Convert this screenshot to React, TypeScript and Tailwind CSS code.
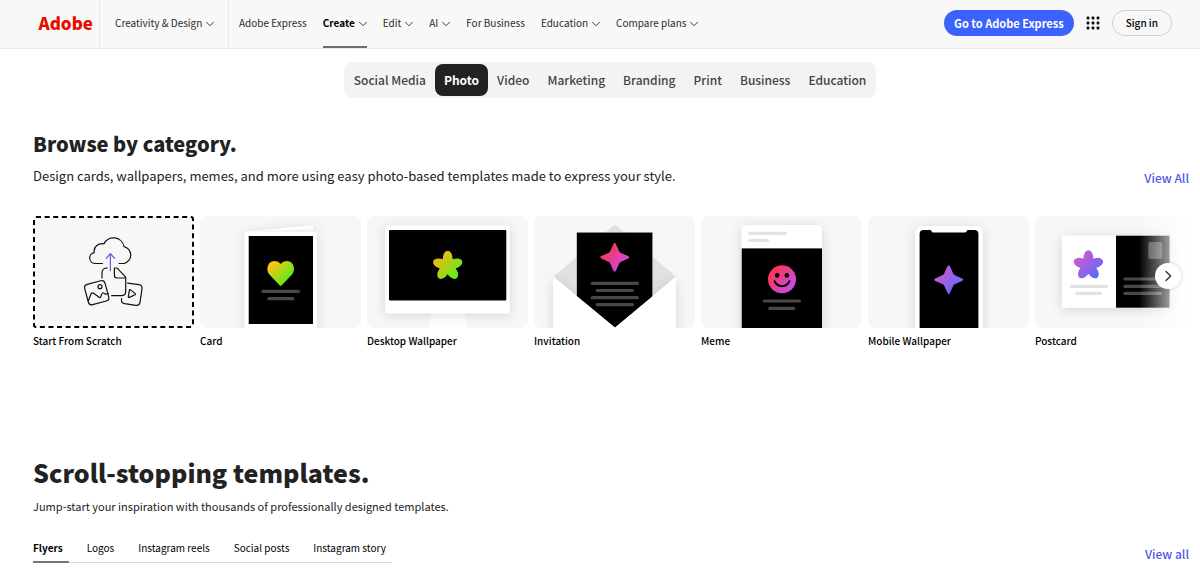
import React from 'react';

interface NavItem {
  label: string;
  menu?: boolean;
  active?: boolean;
}

const navItems: NavItem[] = [
  { label: 'Adobe Express' },
  { label: 'Create', menu: true, active: true },
  { label: 'Edit', menu: true },
  { label: 'AI', menu: true },
  { label: 'For Business' },
  { label: 'Education', menu: true },
  { label: 'Compare plans', menu: true },
];

const categoryTabs = ['Social Media', 'Photo', 'Video', 'Marketing', 'Branding', 'Print', 'Business', 'Education'];

const templateTabs = ['Flyers', 'Logos', 'Instagram reels', 'Social posts', 'Instagram story'];

const Chevron: React.FC = () => (
  <svg className="mt-0.5 h-2 w-2 shrink-0" viewBox="0 0 8 8" fill="none" stroke="#444" strokeWidth="1">
    <path d="M0.3 2 L4 5.8 L7.7 2" />
  </svg>
);

const Line: React.FC<{ x1: number; x2: number; y: number; color?: string }> = ({ x1, x2, y, color = '#484848' }) => (
  <line x1={x1 + 1.6} x2={x2 - 1.6} y1={y} y2={y} stroke={color} strokeWidth="3.2" strokeLinecap="round" />
);

const Gradient: React.FC<{ id: string; from: string; to: string }> = ({ id, from, to }) => (
  <linearGradient id={id} x1="0.1" y1="0.15" x2="0.85" y2="0.85">
    <stop offset="0" stopColor={from} />
    <stop offset="1" stopColor={to} />
  </linearGradient>
);

const Shadow: React.FC<{ id: string }> = ({ id }) => (
  <filter id={id} x="-30%" y="-30%" width="160%" height="160%">
    <feDropShadow dx="0" dy="2" stdDeviation="6" floodColor="#000" floodOpacity="0.14" />
  </filter>
);

const Flower: React.FC<{ id: string; cx: number; cy: number; from: string; to: string }> = ({ id, cx, cy, from, to }) => (
  <g transform={`translate(${cx} ${cy})`}>
    <defs>
      <Gradient id={`${id}-fill`} from={from} to={to} />
      <clipPath id={`${id}-petals`}>
        {[0, 72, 144, 216, 288].map((angle) => (
          <ellipse key={angle} cx="0" cy="-7.4" rx="4.9" ry="7.8" transform={`rotate(${angle})`} />
        ))}
        <circle r="5.4" />
      </clipPath>
    </defs>
    <rect x="-15.4" y="-15.4" width="30.8" height="30.8" fill={`url(#${id}-fill)`} clipPath={`url(#${id}-petals)`} />
  </g>
);

const Sparkle: React.FC<{ id: string; cx: number; cy: number; from: string; to: string }> = ({ id, cx, cy, from, to }) => (
  <g transform={`translate(${cx} ${cy})`}>
    <defs>
      <Gradient id={`${id}-fill`} from={from} to={to} />
    </defs>
    <path
      d="M-1.2 -13.4Q0 -15.6 1.2 -13.4L4.4 -6.4Q5 -5 6.4 -4.4L13.4 -1.2Q15.6 0 13.4 1.2L6.4 4.4Q5 5 4.4 6.4L1.2 13.4Q0 15.6 -1.2 13.4L-4.4 6.4Q-5 5 -6.4 4.4L-13.4 1.2Q-15.6 0 -13.4 -1.2L-6.4 -4.4Q-5 -5 -4.4 -6.4Z"
      fill={`url(#${id}-fill)`}
    />
  </g>
);

const Art: React.FC<{ children: React.ReactNode }> = ({ children }) => (
  <svg className="block h-28 w-full rounded-lg bg-[#f7f7f7]" viewBox="0 0 161 112" aria-hidden="true">
    {children}
  </svg>
);

const ScratchArt: React.FC = () => (
  <svg className="block h-28 w-full" viewBox="0 0 161 112" aria-hidden="true">
    <rect x="1" y="1" width="159" height="110" rx="2" fill="#f7f7f7" stroke="#000" strokeWidth="2" strokeDasharray="5 3.6" />
    <g transform="translate(0 -1)" fill="none" stroke="#111" strokeWidth="1.2" strokeLinecap="round" strokeLinejoin="round">
      <path d="M69.5 48.5H61.8A5.5 5.5 0 0 1 61.2 37.6C60.3 32 65 28 71 28.8A10.6 10.6 0 0 1 91 31.7A8.6 8.6 0 0 1 91 48.5H86" />
      <path d="M69 63V58Q69 53 74.3 53" />
      <path d="M78.7 80.7H88.5Q92.7 80.7 92.7 76.5V62.2L84.4 53.4Q84 53 83.4 53H81.4V60.6Q81.4 63 83.8 63H92.7" />
      <rect x="53.2" y="67.2" width="21" height="21" rx="3.4" transform="rotate(-15 63.7 77.7)" />
      <circle cx="67" cy="71.7" r="2" />
      <path d="M55.4 85.4L58 79Q59 77 61 78.6L66.4 82.4Q67.4 83 67.8 81.8L68.6 79.4Q69.4 77 71.4 78.4Q73 79.6 75.4 78.8" />
      <path d="M94.6 68.2L105.8 69.7Q109.5 70.2 109 73.7L107 87.3Q106.4 90.8 102.7 90.3L91.7 88.7Q88.2 88 88.5 84.6V83.6" />
      <path d="M96.4 75.2Q96.6 74.2 97.6 74.9L102.2 78.6Q103 79.3 102 79.8L96.4 82.4Q95.2 82.8 95.3 81.8Z" />
      <path d="M77.4 55.6V38.6M73.2 43.4L77.4 38.6L81.6 43.4" stroke="#5c5ce0" />
    </g>
  </svg>
);

const CardArt: React.FC = () => (
  <Art>
    <defs>
      <Shadow id="card-shadow" />
      <Gradient id="heart-fill" from="#ffc414" to="#4fee1c" />
    </defs>
    <g filter="url(#card-shadow)">
      <path d="M45 15.7L113 9.3V20H45Z" fill="#fdfdfd" />
      <rect x="44.7" y="15.7" width="72" height="110" fill="#fff" />
    </g>
    <path d="M47 15.5H113V13.4Z" fill="#eee" />
    <rect x="48.7" y="20" width="64.3" height="88" />
    <path
      d="M79.6 69.3L69.4 58.6C65.6 54.4 67.2 45 74.4 45C77.2 45 79 46.2 80.7 48C82.4 46.2 84.2 45 87 45C94.2 45 95.8 54.4 92 58.6L81.8 69.3Q80.7 70.4 79.6 69.3Z"
      fill="url(#heart-fill)"
    />
    <Line x1={61.3} x2={100} y={75.3} />
    <Line x1={67.3} x2={94.3} y={82.7} />
  </Art>
);

const DesktopArt: React.FC = () => (
  <Art>
    <defs>
      <Shadow id="desktop-shadow" />
    </defs>
    <rect x="63" y="95" width="36" height="30" fill="#fff" />
    <rect x="18.3" y="9.7" width="124.3" height="87.6" rx="1.5" fill="#fff" filter="url(#desktop-shadow)" />
    <rect x="22" y="14" width="117.3" height="70.6" rx="1" />
    <Flower id="desktop-flower" cx={80.7} cy={50} from="#ffb414" to="#58f01c" />
  </Art>
);

const InvitationArt: React.FC = () => (
  <Art>
    <defs>
      <Shadow id="invitation-shadow" />
    </defs>
    <path d="M79.4 9.8Q81 8.6 82.6 9.8L142 60.7L81 112L19.3 60.7Z" fill="#e1e1e1" />
    <path d="M19.3 60.7L81 112L142 60.7V125H19.3Z" fill="#fff" filter="url(#invitation-shadow)" />
    <rect x="42.5" y="16.3" width="76.2" height="70" fill="#999" />
    <path d="M43 16.8H118.2V80.7L81 112L43 80.2Z" />
    <path d="M19.3 60.7L81 111.4L142 60.7V125H19.3Z" fill="#fff" />
    <Sparkle id="invitation-star" cx={80.7} cy={41.3} from="#ff3347" to="#c94be8" />
    <Line x1={56.7} x2={105} y={67.3} />
    <Line x1={61.7} x2={100} y={74.5} />
    <Line x1={56.7} x2={105} y={81.7} />
    <Line x1={61.7} x2={100} y={88.7} />
  </Art>
);

const MemeArt: React.FC = () => (
  <Art>
    <defs>
      <Shadow id="meme-shadow" />
      <Gradient id="smile-fill" from="#ff3347" to="#c94be8" />
    </defs>
    <rect x="40.7" y="9" width="80.3" height="120" rx="5" fill="#fff" filter="url(#meme-shadow)" />
    <rect x="40.7" y="32.4" width="80.3" height="80" />
    <Line x1={47.3} x2={85.7} y={17.3} color="#e2e2e2" />
    <Line x1={47.3} x2={68} y={24.4} color="#e2e2e2" />
    <circle cx="81" cy="63.3" r="14" fill="url(#smile-fill)" />
    <circle cx="76.2" cy="59.4" r="2.3" />
    <circle cx="85.8" cy="59.4" r="2.3" />
    <path d="M73.6 65.2A8 8 0 0 0 88.4 65.2" fill="none" stroke="#000" strokeWidth="2" strokeLinecap="round" />
    <Line x1={61.7} x2={100} y={85} />
    <Line x1={67.3} x2={94.3} y={92.3} />
  </Art>
);

const MobileArt: React.FC = () => (
  <Art>
    <defs>
      <Shadow id="mobile-shadow" />
    </defs>
    <rect x="47.3" y="10" width="67.4" height="120" rx="6.5" fill="#fff" filter="url(#mobile-shadow)" />
    <path d="M51.6 112V18Q51.6 14 55.6 14H61.6Q63.4 14 63.7 15.4Q64 16.5 65.4 16.5H96.8Q98.2 16.5 98.5 15.4Q98.8 14 100.6 14H106.4Q110.4 14 110.4 18V112Z" />
    <Sparkle id="mobile-star" cx={80.7} cy={63.7} from="#d957c8" to="#5a6bff" />
  </Art>
);

const PostcardArt: React.FC = () => (
  <Art>
    <defs>
      <Shadow id="postcard-shadow" />
    </defs>
    <rect x="27" y="19.7" width="107.6" height="72" fill="#fff" filter="url(#postcard-shadow)" />
    <rect x="81" y="19.7" width="53.6" height="72" />
    <Flower id="postcard-flower" cx={53.4} cy={49.4} from="#d957c8" to="#5a6bff" />
    <Line x1={34.7} x2={73} y={70.3} color="#e2e2e2" />
    <Line x1={40.3} x2={67.3} y={77.4} color="#e2e2e2" />
    <rect x="113.3" y="26" width="14" height="17" rx="2" fill="#484848" />
    <Line x1={88.3} x2={127} y={63} />
    <Line x1={88.3} x2={127} y={70.3} />
    <Line x1={88.3} x2={127} y={77.4} />
  </Art>
);

const categories: { label: string; Picture: React.FC }[] = [
  { label: 'Start From Scratch', Picture: ScratchArt },
  { label: 'Card', Picture: CardArt },
  { label: 'Desktop Wallpaper', Picture: DesktopArt },
  { label: 'Invitation', Picture: InvitationArt },
  { label: 'Meme', Picture: MemeArt },
  { label: 'Mobile Wallpaper', Picture: MobileArt },
  { label: 'Postcard', Picture: PostcardArt },
];

const Header: React.FC = () => (
  <header className="flex h-[49px] items-stretch border-b border-[#ececec] bg-[#f8f8f8] text-[10px] leading-4 text-[#2c2c2c]">
    <a href="#" className="flex w-[100px] items-center justify-end border-r border-[#e8e8e8] pr-1.5 pb-0.5 text-[17px] leading-5 font-black text-[#e80c00]">
      Adobe
    </a>
    <div className="flex w-[129px] items-stretch border-r border-[#e8e8e8] pl-[15px]">
      <button className="flex items-center gap-1 whitespace-nowrap pb-0.5">
        Creativity &amp; Design
        <Chevron />
      </button>
    </div>
    <nav className="flex items-stretch gap-4 pl-2.5">
      {navItems.map((item) =>
        item.menu ? (
          <button
            key={item.label}
            className={`flex items-center gap-1 whitespace-nowrap border-b-2 ${
              item.active ? 'border-[#6e6e6e] font-bold text-black' : 'border-transparent'
            }`}
          >
            {item.label}
            <Chevron />
          </button>
        ) : (
          <a key={item.label} href="#" className="flex items-center whitespace-nowrap border-b-2 border-transparent">
            {item.label}
          </a>
        )
      )}
    </nav>
    <div className="ml-auto flex items-center gap-3 pr-7 pb-0.5">
      <button className="h-[26px] rounded-full bg-[#3b63fb] px-2.5 text-[11px] font-bold whitespace-nowrap text-white">
        Go to Adobe Express
      </button>
      <button aria-label="Apps">
        <svg className="h-[14px] w-[14px]" viewBox="0 0 14 14" fill="#111">
          {[2, 7, 12].map((y) => [2, 7, 12].map((x) => <rect key={`${x}-${y}`} x={x - 1.4} y={y - 1.4} width="2.8" height="2.8" rx="0.9" />))}
        </svg>
      </button>
      <button className="h-[26px] rounded-full border border-[#cfcfcf] px-[13px] font-medium whitespace-nowrap text-black">
        Sign in
      </button>
    </div>
  </header>
);

const App: React.FC = () => {
  return (
    <div className="min-h-screen overflow-hidden bg-white font-['Noto_Sans_CJK_JP','Noto_Sans_CJK_SC','Open_Sans',sans-serif] text-[#222]">
      <Header />

      <div className="mt-[13px] flex justify-center pl-5">
        <div role="tablist" className="flex h-9 items-center rounded-lg bg-[#f3f3f3] px-px text-xs font-medium text-[#444]">
          {categoryTabs.map((tab) => (
            <button
              key={tab}
              role="tab"
              aria-selected={tab === 'Photo'}
              className={`h-8 rounded-lg px-[9px] whitespace-nowrap ${tab === 'Photo' ? 'bg-[#222] font-bold text-white' : ''}`}
            >
              {tab}
            </button>
          ))}
        </div>
      </div>

      <section className="pt-8 pr-[11px] pl-[33px]">
        <h2 className="text-xl leading-7 font-black">Browse by category.</h2>
        <div className="mt-1.5 flex items-center justify-between">
          <p className="text-[13px] leading-5">
            Design cards, wallpapers, memes, and more using easy photo-based templates made to express your style.
          </p>
          <a href="#" className="pt-1 text-xs leading-5 font-medium text-[#5258e4]">
            View All
          </a>
        </div>
        <div className="relative mt-7">
          <ul className="flex gap-1.5 overflow-hidden">
            {categories.map(({ label, Picture }) => (
              <li key={label} className="w-[161px] shrink-0">
                <a href="#" className="block">
                  <Picture />
                  <span className="mt-[5px] block text-[10px] leading-4 font-medium text-black">{label}</span>
                </a>
              </li>
            ))}
          </ul>
          <div className="absolute top-0 right-0 h-28 w-[50px] bg-linear-to-r from-white/0 to-white" />
          <button
            aria-label="Next"
            className="absolute top-[47px] right-2 flex h-[26px] w-[26px] items-center justify-center rounded-full bg-white shadow-[0_0_4px_rgba(0,0,0,0.16)]"
          >
            <svg className="h-3 w-3" viewBox="0 0 12 12" fill="none" stroke="#333" strokeWidth="1.4" strokeLinecap="round" strokeLinejoin="round">
              <path d="M4 1.4L8.6 6L4 10.6" />
            </svg>
          </button>
        </div>
      </section>

      <section className="pt-[105px] pr-[11px] pl-[33px]">
        <h2 className="text-[25px] leading-9 font-black">Scroll-stopping templates.</h2>
        <p className="mt-2 text-[11px] leading-4">Jump-start your inspiration with thousands of professionally designed templates.</p>
        <div className="mt-[26px] flex items-start justify-between">
          <div role="tablist" className="flex gap-[18px] border-b border-[#d9d9d9] text-[10px] leading-4 text-black">
            {templateTabs.map((tab) => (
              <button
                key={tab}
                role="tab"
                aria-selected={tab === 'Flyers'}
                className={`-mb-px flex h-[23px] items-start whitespace-nowrap border-b-2 pr-1.5 ${
                  tab === 'Flyers' ? 'border-[#777] font-bold' : 'border-transparent'
                }`}
              >
                {tab}
              </button>
            ))}
          </div>
          <a href="#" className="pt-1 text-xs leading-5 font-medium text-[#5258e4]">
            View all
          </a>
        </div>
      </section>
    </div>
  );
};

export default App;
